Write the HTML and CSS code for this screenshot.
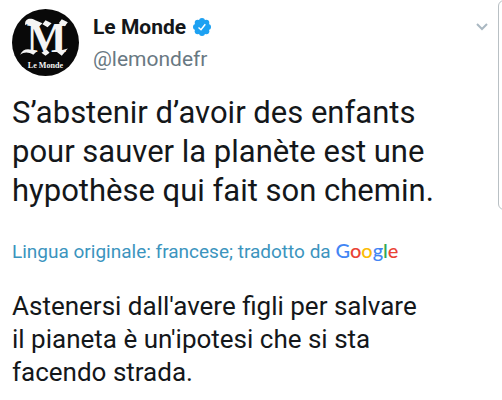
FILE: index.html
```html
<!DOCTYPE html>
<html lang="it">
<head>
<meta charset="utf-8">
<meta name="viewport" content="width=device-width, initial-scale=1">
<title>Le Monde</title>
<link rel="stylesheet" href="styles.css">
</head>
<body>
<div class="page">
  <article class="tweet">
    <header class="header">
      <svg class="avatar" viewBox="0 0 66 66" aria-hidden="true">
        <circle cx="33" cy="33" r="33" fill="#090909"/>
        <text class="avatar-initial" x="34" y="42" text-anchor="middle">M</text>
        <path d="M13 16C12 10 17 8 23 11L30 14L26 18C21 16 16 13 13 16Z M8 45C11 39 16 38 24 42L21 45C16 42 12 42 8 45Z M49 10L55 13L52 17L46 14Z M48 41L55 39L49 46L44 42Z M33 11L39 14L35 18L30 15Z M34 40L37 43L33 46L29 43Z" fill="#f4f4f4"/>
        <text class="avatar-name" x="33" y="58" text-anchor="middle">Le Monde</text>
      </svg>
      <div class="identity">
        <div class="name-row">
          <h1 class="name">Le Monde</h1>
          <svg class="verified" viewBox="0 0 20 20" aria-hidden="true">
            <g fill="#1da1f2">
              <circle cx="10" cy="10" r="7"/>
              <circle cx="10" cy="4" r="3"/><circle cx="14.300" cy="5.700" r="3"/>
              <circle cx="16" cy="10" r="3"/><circle cx="14.300" cy="14.300" r="3"/>
              <circle cx="10" cy="16" r="3"/><circle cx="5.700" cy="14.300" r="3"/>
              <circle cx="4" cy="10" r="3"/><circle cx="5.700" cy="5.700" r="3"/>
            </g>
            <path d="M6.500 10.500L9 12.700L13.300 7.300" fill="none" stroke="#fff" stroke-width="1.500"/>
          </svg>
        </div>
        <a class="handle" href="#">@lemondefr</a>
      </div>
      <button class="more" type="button" aria-label="Menu">
        <svg class="chevron" viewBox="0 0 12 8" aria-hidden="true"><path d="M1 1L6 6L11 1" fill="none" stroke="#aab8c2" stroke-width="2"/></svg>
      </button>
    </header>
    <p class="text" lang="fr">S’abstenir d’avoir des enfants pour sauver la planète est une hypothèse qui fait son chemin.</p>
    <a class="source" href="#">Lingua originale: francese; tradotto da <span class="google"><span class="blue">G</span><span class="red">o</span><span class="yellow">o</span><span class="blue">g</span><span class="green">l</span><span class="red">e</span></span></a>
    <p class="translation">Astenersi dall'avere figli per salvare il pianeta è un'ipotesi che si sta facendo strada.</p>
  </article>
  <aside class="next-card"></aside>
</div>
</body>
</html>
```
FILE: styles.css
```css
* {
  box-sizing: border-box;
}

body {
  margin: 0;
  background: #fff;
  color: #14171a;
  font-family: Roboto, "Liberation Sans", sans-serif;
}

.page {
  display: grid;
  grid-template-columns: 1fr 4px;
  align-items: start;
  overflow: hidden;
}

.tweet {
  padding: 9px 10px 8px 12px;
}

.header {
  display: flex;
  align-items: flex-start;
  gap: 14px;
}

.avatar {
  width: 67px;
  height: 67px;
  flex: none;
}

.avatar-initial {
  fill: #f4f4f4;
  font: bold 42px "Liberation Serif", serif;
}

.avatar-name {
  fill: #f4f4f4;
  font: bold 8px "Liberation Serif", serif;
}

.identity {
  flex: 1;
}

.name-row {
  display: flex;
  align-items: center;
  gap: 6px;
  padding-top: 4px;
}

.name {
  margin: 0;
  font-size: 21px;
  font-weight: 700;
  line-height: 28px;
}

.verified {
  width: 20px;
  height: 20px;
}

.handle {
  display: block;
  color: #697882;
  font-size: 21px;
  line-height: 36px;
  text-decoration: none;
}

.more {
  display: flex;
  margin: 14px 0 0;
  padding: 0;
  border: 0;
  background: none;
}

.chevron {
  width: 12px;
  height: 8px;
}

.text {
  max-width: 440px;
  margin: 16px 0 0;
  font-size: 31px;
  line-height: 39px;
}

.source {
  display: block;
  margin-top: 28px;
  color: #3b94be;
  font-size: 19px;
  line-height: 24px;
  text-decoration: none;
}

.google {
  font-family: Lato, sans-serif;
  font-size: 20px;
  font-weight: 500;
}

.blue {
  color: #4285f4;
}

.red {
  color: #ea4335;
}

.yellow {
  color: #fbbc05;
}

.green {
  color: #34a853;
}

.translation {
  max-width: 412px;
  margin: 26px 0 0;
  font-size: 26px;
  line-height: 33px;
}

.next-card {
  width: 40px;
  height: 210px;
  border: 1px solid #b9c0c4;
  border-radius: 6px;
}
```
